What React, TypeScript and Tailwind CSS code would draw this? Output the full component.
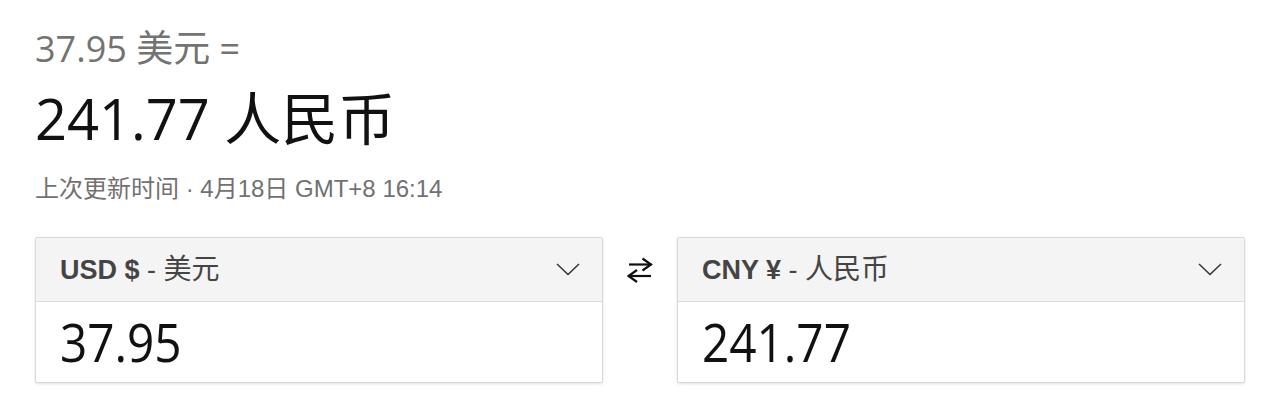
import React from "react";

function Chevron() {
  return (
    <svg width="24" height="13" viewBox="0 0 24 13" fill="none">
      <path d="M1 1 L12 11.5 L23 1" stroke="#333" strokeWidth="1.5" />
    </svg>
  );
}

function SwapIcon() {
  return (
    <svg width="26" height="26" viewBox="0 0 26 26" fill="none">
      <path d="M2 7.5 H24.5" stroke="#111" strokeWidth="2.2" />
      <path d="M15.5 1.5 L24 7.5 L15.5 13.5" stroke="#111" strokeWidth="2.2" />
      <path d="M1.5 19 H24" stroke="#111" strokeWidth="2.2" />
      <path d="M10 13 L1.5 19 L10 25" stroke="#111" strokeWidth="2.2" />
    </svg>
  );
}

function CurrencyBox({ code, symbol, name, value }: { code: string; symbol: string; name: string; value: string }) {
  return (
    <div className="w-[568px] border border-[#dadada] rounded-[2px] bg-white shadow-[0_1px_3px_rgba(0,0,0,0.12)]">
      <div className="h-[64px] bg-[#f4f4f4] border-b border-[#dcdcdc] flex items-center justify-between pl-6 pr-[22px]">
        <div
          className="text-[27px] leading-[32px] text-[#444] whitespace-nowrap"
          style={{ fontFamily: '"Liberation Sans", "Noto Sans CJK SC", sans-serif' }}
        >
          <span className="font-bold">
            {code} {symbol}
          </span>
          <span>
            {" "}- <span className="text-[28px]">{name}</span>
          </span>
        </div>
        <Chevron />
      </div>
      <div className="h-[80px] flex items-center pl-6">
        <span
          className="inline-block origin-left scale-x-[0.9] text-[53px] leading-[60px] text-[#111] whitespace-nowrap"
          style={{ fontFamily: '"Open Sans", "Noto Sans CJK SC", sans-serif' }}
        >
          {value}
        </span>
      </div>
    </div>
  );
}

export default function App() {
  return (
    <div className="w-[1286px] h-[402px] bg-white pl-[35px] pt-[26px] overflow-hidden">
      <div
        className="text-[36px] leading-[44px] text-[#737373] whitespace-nowrap"
        style={{ fontFamily: '"Open Sans", "Noto Sans CJK SC", sans-serif' }}
      >
        37.95 <span className="text-[37px]">美元</span> =
      </div>
      <div
        className="mt-[15px] text-[56px] leading-[64px] text-[#111] whitespace-nowrap"
        style={{ fontFamily: '"Open Sans", "Noto Sans CJK SC", sans-serif' }}
      >
        241.77 <span className="text-[57px]">人民币</span>
      </div>
      <div
        className="mt-[23px] text-[24px] leading-[32px] text-[#717171] whitespace-nowrap"
        style={{ fontFamily: '"Liberation Sans", "Noto Sans CJK SC", sans-serif' }}
      >
        上次更新时间 · 4月18日 GMT+8 16:14
      </div>
      <div className="mt-[32px] flex items-start">
        <CurrencyBox code="USD" symbol="$" name="美元" value="37.95" />
        <div className="w-[74px] h-[65px] flex items-center justify-center">
          <SwapIcon />
        </div>
        <CurrencyBox code="CNY" symbol="¥" name="人民币" value="241.77" />
      </div>
    </div>
  );
}
